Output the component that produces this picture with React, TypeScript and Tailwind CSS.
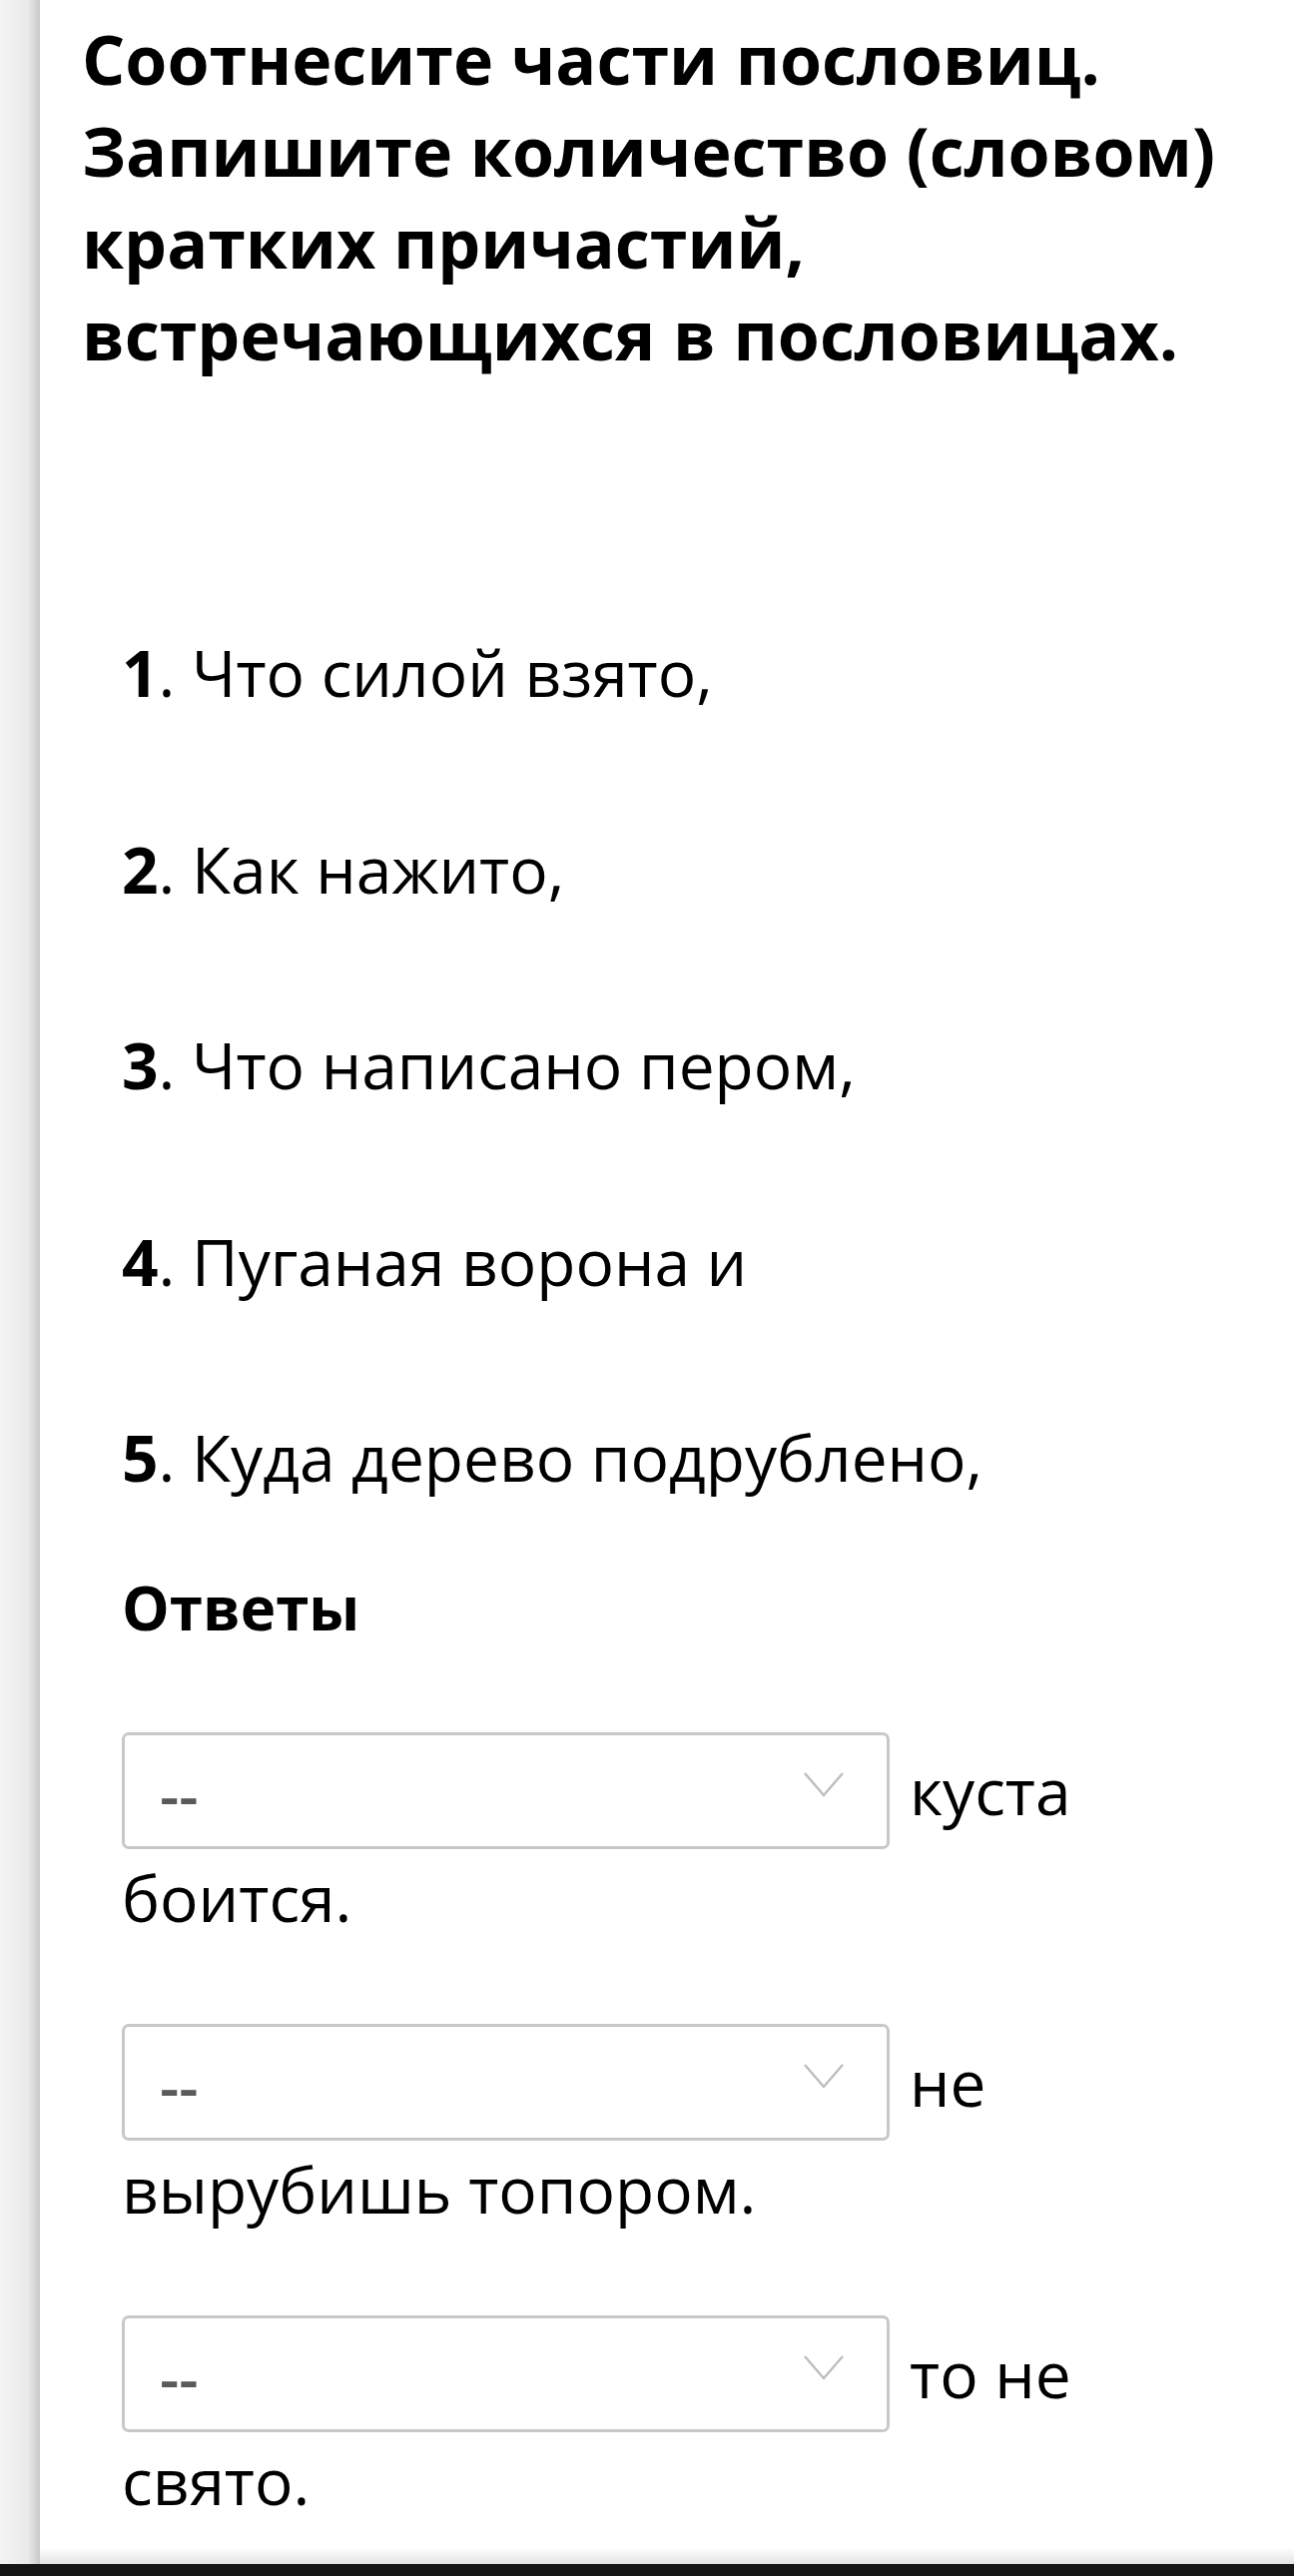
import React from "react";

function Chevron() {
  return (
    <svg
      className="absolute left-[680px] top-[37px]"
      width="40"
      height="25"
      viewBox="0 0 40 25"
      fill="none"
    >
      <polyline points="1,1 20,23 39,1" stroke="#bdbdbd" strokeWidth="2.4" fill="none" />
    </svg>
  );
}

function Select() {
  return (
    <div className="relative w-[769px] h-[117px] shrink-0 rounded-[7px] border-[3px] border-[#c8c8c8] bg-white flex items-center">
      <span className="pl-[35px] pt-[6px] text-[60px] leading-none text-[#5a5a5a] font-semibold">--</span>
      <Chevron />
    </div>
  );
}

function Answer({ first, rest }: { first: string; rest: string }) {
  return (
    <div className="flex flex-col">
      <div className="flex items-center h-[117px]">
        <Select />
        <span className="ml-[20px] text-[64px] leading-[90px] whitespace-nowrap">{first}</span>
      </div>
      <div className="mt-[4px] text-[64px] leading-[90px] whitespace-nowrap">{rest}</div>
    </div>
  );
}

const items = [
  "Что силой взято,",
  "Как нажито,",
  "Что написано пером,",
  "Пуганая ворона и",
  "Куда дерево подрублено,",
];

export default function App() {
  return (
    <div className="w-[1296px] h-[2580px] flex flex-col bg-white text-black font-['Open_Sans',sans-serif] overflow-hidden">
      <div className="flex flex-1 min-h-0">
        <div className="w-[40px] shrink-0 bg-linear-to-r from-[#f4f4f4] via-[#eaeaea] via-70% to-[#c8c8c8]" />
        <div className="flex-1 flex flex-col min-h-0">
          <div className="flex flex-col pl-[42px] pt-[13px]">
            <h1 className="text-[68px] leading-[92px] font-bold whitespace-nowrap">
              Соотнесите части пословиц.
              <br />
              Запишите количество (словом)
              <br />
              кратких причастий,
              <br />
              встречающихся в пословицах.
            </h1>
            <div className="pl-[40px] mt-[248px] flex flex-col gap-[106.5px]">
              {items.map((t, i) => (
                <div key={i} className="text-[64px] leading-[90px] whitespace-nowrap">
                  <span className="font-bold">{i + 1}</span>. {t}
                </div>
              ))}
            </div>
            <div className="pl-[40px] mt-[60px] text-[60px] leading-[90px] font-bold">Ответы</div>
            <div className="pl-[40px] mt-[80px] flex flex-col gap-[81px]">
              <Answer first="куста" rest="боится." />
              <Answer first="не" rest="вырубишь топором." />
              <Answer first="то не" rest="свято." />
            </div>
          </div>
          <div className="mt-auto h-[16px] bg-linear-to-b from-white to-[#e3e3e3]" />
        </div>
      </div>
      <div className="h-[12px] shrink-0 bg-[#161616]" />
    </div>
  );
}
